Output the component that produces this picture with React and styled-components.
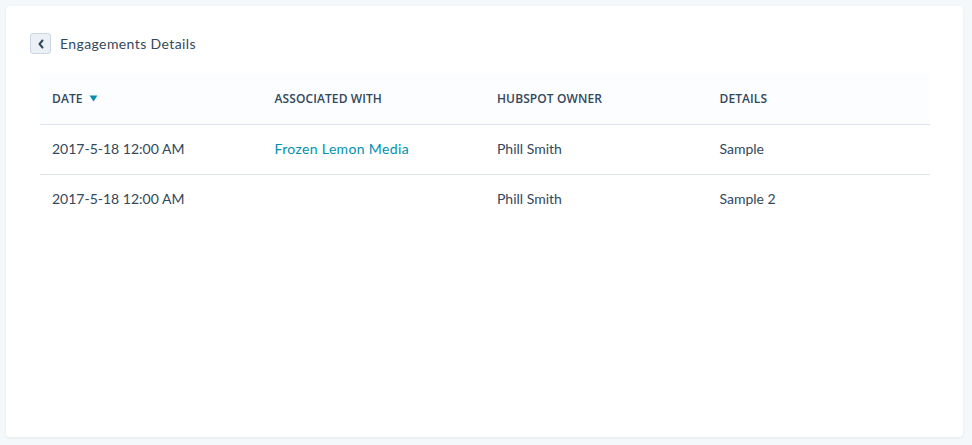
import React from 'react'
import styled, { createGlobalStyle } from 'styled-components'

const GlobalStyle = createGlobalStyle`
    html, body {
        margin: 0;
        padding: 0;
        background: #f5f8fa;
        font-family: Lato, "Open Sans", sans-serif;
        color: #33475b;
    }
`

const rows = [
    { date: '2017-5-18 12:00 AM', associated: 'Frozen Lemon Media', owner: 'Phill Smith', details: 'Sample' },
    { date: '2017-5-18 12:00 AM', associated: '', owner: 'Phill Smith', details: 'Sample 2' },
]

const App = () => {
    return (
        <Page>
            <GlobalStyle />
            <Card>
                <TitleBar>
                    <BackButton aria-label="Back">
                        <svg width="8" height="10" viewBox="0 0 8 10">
                            <path d="M5.5 1.5 L2.5 5 L5.5 8.5" fill="none" stroke="#33475b" strokeWidth="2" strokeLinecap="round" strokeLinejoin="round" />
                        </svg>
                    </BackButton>
                    <Title>Engagements Details</Title>
                </TitleBar>
                <Table>
                    <thead>
                        <tr>
                            <Th>
                                DATE
                                <SortArrow viewBox="0 0 10 8">
                                    <path d="M0.5 0.5 H9.5 L5 7.5 Z" fill="#0091ae" />
                                </SortArrow>
                            </Th>
                            <Th>ASSOCIATED WITH</Th>
                            <Th>HUBSPOT OWNER</Th>
                            <Th>DETAILS</Th>
                        </tr>
                    </thead>
                    <tbody>
                        {rows.map((r, i) => (
                            <tr key={i}>
                                <Td>{r.date}</Td>
                                <Td>{r.associated && <Link href="#">{r.associated}</Link>}</Td>
                                <Td>{r.owner}</Td>
                                <Td>{r.details}</Td>
                            </tr>
                        ))}
                    </tbody>
                </Table>
            </Card>
        </Page>
    )
}

export default App

const Page = styled.div`
    padding: 6px 9px 8px 6px;
    box-sizing: border-box;
    height: 445px;
`

const Card = styled.div`
    background: #fff;
    border-radius: 4px;
    box-shadow: 0 1px 3px rgba(45, 62, 80, 0.08);
    height: 431px;
    padding: 27px 34px 0 34px;
    box-sizing: border-box;
`

const TitleBar = styled.div`
    display: flex;
    align-items: center;
    gap: 9px;
    margin-left: -10px;
`

const BackButton = styled.button`
    width: 21px;
    height: 21px;
    padding: 0;
    display: flex;
    align-items: center;
    justify-content: center;
    background: #eaf0f6;
    border: 1px solid #cbd6e2;
    border-radius: 3px;
    cursor: pointer;
`

const Title = styled.span`
    font-size: 14px;
    line-height: 21px;
    letter-spacing: 0.4px;
    color: #33475b;
`

const Table = styled.table`
    width: 890px;
    margin-top: 19px;
    border-collapse: collapse;
    table-layout: fixed;
    font-size: 14px;
    color: #33475b;

    thead tr {
        background: #fcfdfe;
    }
`

const Th = styled.th`
    text-align: left;
    font-family: "Open Sans", Lato, sans-serif;
    font-size: 12px;
    font-weight: 600;
    letter-spacing: 0.1px;
    padding: 0 12px 1px;
    height: 50px;
    border-bottom: 1px solid #dfe3eb;
    white-space: nowrap;
`

const SortArrow = styled.svg`
    width: 9px;
    height: 7px;
    margin-left: 6px;
    vertical-align: 1px;
`

const Td = styled.td`
    padding: 0 12px 2px;
    height: 47px;
    border-bottom: 1px solid #dfe3eb;

    tr:last-child & {
        border-bottom: none;
    }
`

const Link = styled.a`
    color: #0091ae;
    text-decoration: none;
    letter-spacing: 0.35px;
`
